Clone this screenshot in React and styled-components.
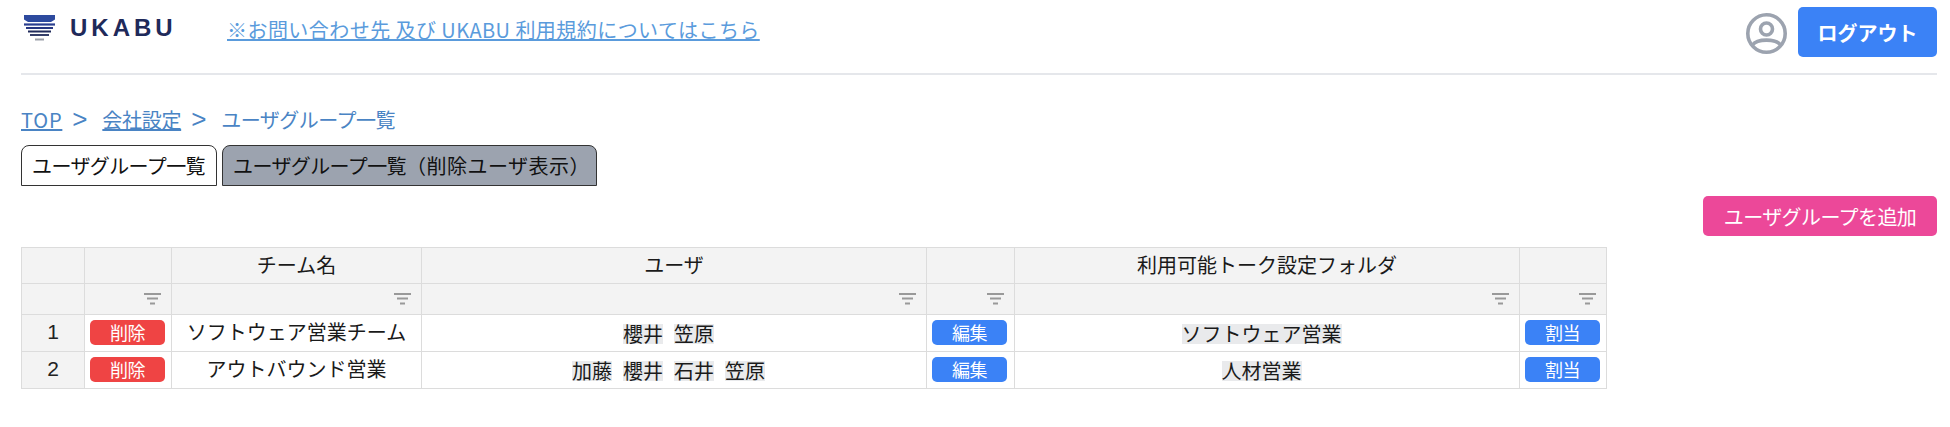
import React from "react";
import styled, { createGlobalStyle } from "styled-components";

const Global = createGlobalStyle`
  html, body { margin: 0; padding: 0; background: #fff; }
  body { font-family: "Noto Sans CJK JP", "Noto Sans", sans-serif; color: #1a1a1a; }
`;
const Page = styled.div`
  width: 1950px; height: 427px; box-sizing: border-box; padding: 0 13px 0 21px; overflow: hidden;
`;
const Header = styled.header`
  height: 73px; border-bottom: 2px solid #e5e7eb; display: flex; align-items: flex-start;
`;
const Logo = styled.div`
  display: flex; align-items: center; gap: 15px; margin: 13px 0 0 3px; width: 203px; flex: none;
`;
const LogoWord = styled.span`
  font-family: "Liberation Sans", sans-serif; font-weight: 700; font-size: 24px; line-height: 27px; letter-spacing: 4px; color: #1f2a5a;
`;
const TopLink = styled.a`
  margin-top: 15px; font-size: 20px; line-height: 30px; color: #5a9bdc; text-decoration: underline; letter-spacing: .45px;
`;
const HeaderRight = styled.div`
  margin-left: auto; display: flex; align-items: flex-start; gap: 11px; margin-top: 7px;
  svg { margin-top: 6px; }
`;
const Logout = styled.button`
  width: 139px; height: 50px; border: 0; border-radius: 5px; background: #3b82f6; color: #fff; font: 700 20px "Noto Sans CJK JP", sans-serif; padding: 0;
`;
const Crumbs = styled.nav`
  margin-top: 29px; height: 30px; display: flex; align-items: center; font-size: 20px; color: #4a84c4; letter-spacing: -.5px;
`;
const CrumbLink = styled.a`
  color: #4a84c4; text-decoration: underline; letter-spacing: ${p => p.$ls || -0.3}px;
`;
const Sep = styled.span`
  font: 400 26px/1 "Liberation Sans", sans-serif; width: 15px; margin: 0 15px 0 10px; letter-spacing: 0;
`;
const Tabs = styled.div`
  display: flex; gap: 5px; margin-top: 11px;
`;
const Tab = styled.div`
  height: 41px; box-sizing: border-box; padding: 0 10px; border: 1px solid #333;
  border-radius: 8px 8px 0 0; background: ${p => p.$active ? "#fff" : "#9ca3af"};
  width: ${p => p.$w}px; font-size: 20px; line-height: 39px; white-space: nowrap; color: #111; letter-spacing: -.6px;
`;
const TabNote = styled.span`
  letter-spacing: .5px;
`;
const Actions = styled.div`
  display: flex; justify-content: flex-end; margin-top: 10px;
`;
const AddButton = styled.button`
  width: 234px; height: 40px; padding: 0; border: 0; border-radius: 5px; background: #ec4899; color: #fff;
  font: 400 20px "Noto Sans CJK JP", sans-serif; letter-spacing: -.6px;
`;
const Table = styled.table`
  margin-top: 11px; border-collapse: collapse; table-layout: fixed; width: 1585px;
  font-size: 20px; line-height: 24px; text-align: center;
  td, th { border: 1px solid #dcdcdc; padding: 0 0 2px; font-weight: 400; box-sizing: border-box; }
`;
const HeadCell = styled.th`
  background: #f3f3f3; height: 36px;
`;
const FilterCell = styled.th`
  background: #f3f3f3; height: 31px;
  svg { display: block; margin: 1px 10px 0 auto; }
`;
const NumCell = styled.td`
  background: #f3f3f3; height: 37px; color: #222; font-size: 21px; font-family: "Liberation Sans", sans-serif;
`;
const Cell = styled.td`
  background: #fff; height: 37px;
`;
const Small = styled.button`
  display: block; margin: 0 auto 0 5px; width: 75px; height: 25px; border: 0; border-radius: 5px; padding: 0;
  background: ${p => p.$c}; color: #fff; font: 400 18px/25px "Noto Sans CJK JP", sans-serif; letter-spacing: -.5px;
`;
const Chip = styled.span`
  display: inline-block; height: 20px; line-height: 20px; background: #e9eaec; margin-right: 11px; vertical-align: middle;
`;

const Filter = () => (
  <svg width="17" height="12" viewBox="0 0 17 12" aria-hidden="true">
    <path d="M0 1h17M3 5.5h11M6 10.5h5" stroke="#999" strokeWidth="1.8" fill="none" />
  </svg>
);
const LogoMark = () => (
  <svg width="31" height="28" viewBox="0 0 31 28" aria-hidden="true">
    <path d="M0 2h31v4.5L27 9H4L0 6.5z" fill="#2d4a9e" />
    <path d="M0 11.5h31" stroke="#2a3f8f" strokeWidth="2.2" />
    <path d="M2 15h27" stroke="#263680" strokeWidth="2" />
    <path d="M4 18.5h23" stroke="#1f2a5a" strokeWidth="2" />
    <path d="M6 22h19" stroke="#1f2a5a" strokeWidth="1.8" />
    <path d="M11 26.5h9" stroke="#9a9ea8" strokeWidth="2" />
  </svg>
);
const Avatar = () => (
  <svg width="41" height="41" viewBox="0 0 41 41" fill="none" stroke="#9ca3af" strokeWidth="3.6" aria-hidden="true">
    <circle cx="20.5" cy="20.5" r="18.7" />
    <circle cx="20.5" cy="16" r="6" />
    <path d="M6.5 32 C11 25.5 30 25.5 34.5 32" />
  </svg>
);

const cols = [63, 87, 250, 505, 88, 505, 87];
const rows = [
  { n: 1, team: "ソフトウェア営業チーム", users: ["櫻井", "笠原"], folder: "ソフトウェア営業" },
  { n: 2, team: "アウトバウンド営業", users: ["加藤", "櫻井", "石井", "笠原"], folder: "人材営業" },
];

export default function App() {
  return (
    <Page>
      <Global />
      <Header>
        <Logo><LogoMark /><LogoWord>UKABU</LogoWord></Logo>
        <TopLink href="#">※お問い合わせ先 及び UKABU 利用規約についてはこちら</TopLink>
        <HeaderRight><Avatar /><Logout>ログアウト</Logout></HeaderRight>
      </Header>
      <Crumbs>
        <CrumbLink href="#" $ls={0.8}>TOP</CrumbLink><Sep>&gt;</Sep>
        <CrumbLink href="#">会社設定</CrumbLink><Sep>&gt;</Sep>
        <span>ユーザグループ一覧</span>
      </Crumbs>
      <Tabs>
        <Tab $active $w={196}>ユーザグループ一覧</Tab>
        <Tab $w={375}>ユーザグループ一覧<TabNote>（削除ユーザ表示）</TabNote></Tab>
      </Tabs>
      <Actions><AddButton>ユーザグループを追加</AddButton></Actions>
      <Table>
        <colgroup>{cols.map((w, i) => <col key={i} style={{ width: w }} />)}</colgroup>
        <thead>
          <tr>
            <HeadCell /><HeadCell /><HeadCell>チーム名</HeadCell><HeadCell>ユーザ</HeadCell>
            <HeadCell /><HeadCell>利用可能トーク設定フォルダ</HeadCell><HeadCell />
          </tr>
          <tr>
            <FilterCell />
            {[0, 1, 2, 3, 4, 5].map(i => <FilterCell key={i}><Filter /></FilterCell>)}
          </tr>
        </thead>
        <tbody>
          {rows.map(r => (
            <tr key={r.n}>
              <NumCell>{r.n}</NumCell>
              <Cell><Small $c="#ef4444">削除</Small></Cell>
              <Cell>{r.team}</Cell>
              <Cell>{r.users.map(u => <Chip key={u}>{u}</Chip>)}</Cell>
              <Cell><Small $c="#3b82f6">編集</Small></Cell>
              <Cell><Chip>{r.folder}</Chip></Cell>
              <Cell><Small $c="#3b82f6">割当</Small></Cell>
            </tr>
          ))}
        </tbody>
      </Table>
    </Page>
  );
}
